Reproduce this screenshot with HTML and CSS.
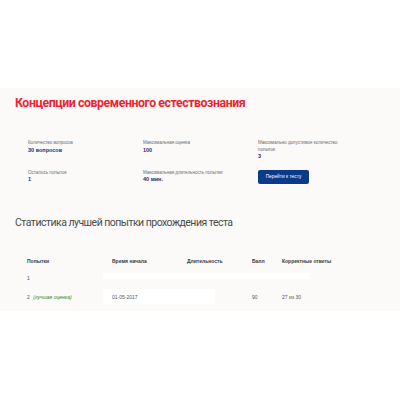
FILE: index.html
```html
<!DOCTYPE html>
<html lang="ru">
<head>
<meta charset="utf-8">
<link rel="stylesheet" href="styles.css">
</head>
<body>
<div class="top"></div>
<section class="panel">
  <h1 class="title">Концепции современного естествознания</h1>
  <div class="info">
    <div class="item"><div class="label">Количество вопросов</div><div class="value">30 вопросов</div></div>
    <div class="item"><div class="label">Максимальная оценка</div><div class="value">100</div></div>
    <div class="item"><div class="label narrow">Максимально допустимое количество попыток</div><div class="value">3</div></div>
    <div class="item"><div class="label">Осталось попыток</div><div class="value">1</div></div>
    <div class="item"><div class="label">Максимальная длительность попытки</div><div class="value">40 мин.</div></div>
    <div class="item"><button class="btn">Перейти к тесту</button></div>
  </div>
  <h2 class="subtitle">Статистика лучшей попытки прохождения теста</h2>
  <div class="table">
    <div class="row head">
      <div class="c c1">Попытки</div>
      <div class="c c2">Время начала</div>
      <div class="c c3">Длительность</div>
      <div class="c c4">Балл</div>
      <div class="c c5">Корректные ответы</div>
    </div>
    <div class="row r1">
      <div class="band band1"></div>
      <div class="c c1">1</div>
    </div>
    <div class="row r2">
      <div class="band band2"></div>
      <div class="c c1">2 <span class="best">(лучшая оценка)</span></div>
      <div class="c c2">01-05-2017</div>
      <div class="c c4">90</div>
      <div class="c c5">27 из 30</div>
    </div>
  </div>
</section>
</body>
</html>
```

FILE: styles.css
```css
* { box-sizing: border-box; }
html, body { margin: 0; padding: 0; background: #ffffff; }
body { font-family: "Liberation Sans", Arial, sans-serif; width: 400px; height: 400px; overflow: hidden; }
.top { height: 88px; }
.panel { background: #fbfaf9; padding: 7px 0 7px 15px; height: 223px; }
.title { margin: 0; font-family: Roboto, "Liberation Sans", sans-serif; font-size: 12.3px; letter-spacing: -0.42px; line-height: 16px; font-weight: 700; color: #ea2430; }
.info { margin: 29px 0 0 13px; display: grid; grid-template-columns: 115px 115px 115px; row-gap: 10px; }
.label { font-size: 4.5px; line-height: 6.5px; color: #6b6b6b; }
.label.narrow { max-width: 84px; }
.value { font-size: 5.5px; line-height: 6.5px; font-weight: 700; color: #1d2f6e; }
.btn { display: block; margin: 0; border: none; border-radius: 2px; background: #0c3a8a; color: #ffffff; font-family: inherit; font-size: 4.8px; width: 51px; height: 14px; padding: 0; }
.subtitle { margin: 31px 0 0 0; font-family: Roboto, "Liberation Sans", sans-serif; font-size: 10.5px; letter-spacing: -0.52px; line-height: 16px; font-weight: 400; color: #4a4a4a; }
.table { margin-top: 26px; }
.row { display: grid; grid-template-columns: 88px 75px 65px 30px 1fr; font-size: 5px; color: #555; }
.c { padding-left: 9px; grid-row: 1; position: relative; white-space: nowrap; }
.c1 { padding-left: 12px; grid-column: 1; }
.c2 { grid-column: 2; }
.c3 { grid-column: 3; }
.c4 { grid-column: 4; }
.c5 { grid-column: 5; }
.head { height: 8px; line-height: 8px; font-weight: 700; color: #3a3a3a; margin-bottom: 8px; }
.r1 { height: 10px; line-height: 10px; margin-bottom: 6px; }
.r2 { height: 16px; line-height: 16px; }
.band { grid-row: 1; background: #ffffff; justify-self: start; align-self: start; }
.band1 { grid-column: 2 / -1; width: 207px; height: 6px; }
.band2 { grid-column: 2 / -1; width: 112px; height: 15px; }
.best { font-style: italic; color: #2e8a2e; margin-left: 2px; }
```
